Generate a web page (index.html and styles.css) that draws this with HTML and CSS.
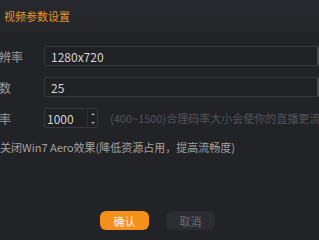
FILE: index.html
```html
<html>
  <head>
    <title>视频参数设置</title>
    <link rel="stylesheet" href="styles.css">
  </head>
  <body>
    <div class="titlebar">视频参数设置</div>

    <div class="form">
      <div class="row">
        <label class="label">分辨率</label>
        <div class="field wide">1280x720</div>
      </div>
      <div class="row">
        <label class="label">帧数</label>
        <div class="field wide">25</div>
      </div>
      <div class="row">
        <label class="label">码率</label>
        <div class="field spin">
          <span class="spin-value">1000</span>
          <span class="spin-arrows">
            <span class="arrow up"></span>
            <span class="arrow down"></span>
          </span>
        </div>
        <span class="hint">(400~1500)合理码率大小会使你的直播更流畅</span>
      </div>
      <div class="check">关闭Win7 Aero效果(降低资源占用，提高流畅度)</div>
    </div>

    <div class="buttons">
      <button class="btn primary">确认</button>
      <button class="btn">取消</button>
    </div>
  </body>
</html>
```

FILE: styles.css
```css
body {
  margin: 0;
  width: 319px;
  height: 240px;
  overflow: hidden;
  background-color: #222327;
  font-family: "Noto Sans CJK SC", "Liberation Sans", sans-serif;
  font-size: 11px;
}
.titlebar {
  height: 32px;
  display: flex;
  align-items: center;
  padding-left: 4px;
  background: linear-gradient(#26282d, #25272b);
  color: #e4962c;
  font-size: 11px;
}
.form {
  padding-top: 14px;
}
.row {
  display: flex;
  align-items: center;
  height: 20px;
  margin-bottom: 11px;
  white-space: nowrap;
}
.label {
  width: 57px;
  margin-left: -13px;
  flex-shrink: 0;
  color: #9c9c9c;
  font-size: 12px;
}
.field {
  box-sizing: border-box;
  height: 20px;
  border: 1px solid #36383c;
  border-radius: 2px;
  background-color: #202125;
  color: #d4d4d4;
  font-size: 12px;
  display: flex;
  align-items: center;
}
.wide {
  width: 276px;
  padding-left: 6px;
  border-right: 2px solid #45474c;
}
.spin {
  width: 54px;
  padding-left: 2px;
  justify-content: space-between;
  flex-shrink: 0;
}
.spin-arrows {
  width: 9px;
  height: 18px;
  border-left: 1px solid #2c2e32;
  display: flex;
  flex-direction: column;
  align-items: center;
  justify-content: space-around;
}
.arrow {
  width: 0;
  height: 0;
  border-left: 2px solid transparent;
  border-right: 2px solid transparent;
}
.up {
  border-bottom: 2px solid #a8a8a8;
}
.down {
  border-top: 2px solid #a8a8a8;
}
.hint {
  margin-left: 12px;
  color: #50545a;
}
.check {
  margin-top: 9px;
  color: #a2a2a2;
  white-space: nowrap;
}
.buttons {
  display: flex;
  justify-content: center;
  gap: 17px;
  margin-top: 56px;
  padding-right: 4px;
}
.btn {
  width: 49px;
  height: 19px;
  border: none;
  border-radius: 6px;
  background-color: #2b2d32;
  color: #6c6e72;
  font-family: "Noto Sans CJK SC", sans-serif;
  font-size: 11px;
  padding: 0;
}
.primary {
  background-color: #f5901a;
  color: #fff6e8;
}
```
